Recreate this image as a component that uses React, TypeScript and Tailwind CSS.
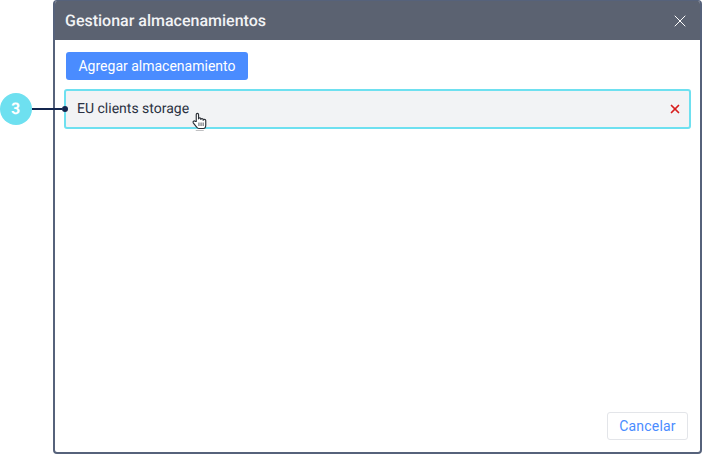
import { X } from "lucide-react";

function Callout() {
  return (
    <div className="absolute left-0 top-[93px] flex items-center">
      <div className="w-8 h-8 pr-px rounded-full bg-[#6ee0f0] flex items-center justify-center text-white text-[16px] font-bold">
        3
      </div>
      <div className="w-[30px] h-0.5 bg-[#14264f]" />
      <div className="w-1.5 h-1.5 rounded-full bg-[#14264f]" />
    </div>
  );
}

function HandCursor() {
  return (
    <svg className="absolute left-[191px] top-[112px]" width="17" height="19" viewBox="0 0 15.500 19" fill="#fff" stroke="#2b2f36" strokeWidth="1.15" strokeLinejoin="round">
      <path d="M4.500 9.500V2.500c0-1.500 2.300-1.500 2.300 0v4.300c0-1.300 2.300-1.300 2.300 0v.7c0-1.300 2.300-1.300 2.300 0v.8c0-1.300 2.600-1.300 2.600.2V13c0 1.800-1 3.500-2.300 3.500H7c-.9 0-1.400-.4-1.900-1.200L1.500 10.800c-.8-1.300.9-2.500 2-1.400z" />
      <path d="M7.200 10.500v3.500M9.300 10.500v3.500M11.400 10.500v3.500" fill="none" strokeWidth="0.8" />
      <rect x="4" y="18" width="8" height="1" fill="#2b2f36" stroke="none" opacity="0.3" />
    </svg>
  );
}

export default function App() {
  return (
    <div className="relative w-[702px] h-[454px] bg-white overflow-hidden font-['Roboto',sans-serif] [text-rendering:geometricPrecision]">
      <div className="pl-[53px] h-full">
        {/* Dialog */}
        <div className="h-[454px] flex flex-col rounded-[4px] border-2 border-t border-[#56627b] bg-white overflow-hidden">
          <div className="h-[39px] shrink-0 bg-[#5b6271] flex items-center justify-between pl-[10px] pr-[10px] pt-px">
            <h1 className="text-[16px] font-medium text-[#f2f3f5]">Gestionar almacenamientos</h1>
            <X size={20} strokeWidth={1.2} className="text-white" />
          </div>
          <div className="flex-1 flex flex-col px-[9px] pt-3 pb-3">
            <button className="self-start ml-0.5 h-7 w-[182px] rounded-[3px] bg-[#4a8cff] text-white text-[14px]">
              Agregar almacenamiento
            </button>
            <div className="mt-[9px] h-10 rounded-[3px] border-2 border-[#6ee0f0] bg-[#f2f3f5] flex items-center justify-between pl-[11px] pr-[7.5px]">
              <span className="pt-px text-[14px] text-[#2a3142]">EU clients storage</span>
              <X size={14} strokeWidth={3} className="text-[#d81e1e]" />
            </div>
            <div className="flex-1" />
            <button className="self-end mr-[3px] h-7 w-[81px] pt-px rounded-[3px] border border-[#e3e5e9] bg-white text-[#4a8cff] text-[14px] tracking-[0.2px]">
              Cancelar
            </button>
          </div>
        </div>
      </div>
      <Callout />
      <HandCursor />
    </div>
  );
}
